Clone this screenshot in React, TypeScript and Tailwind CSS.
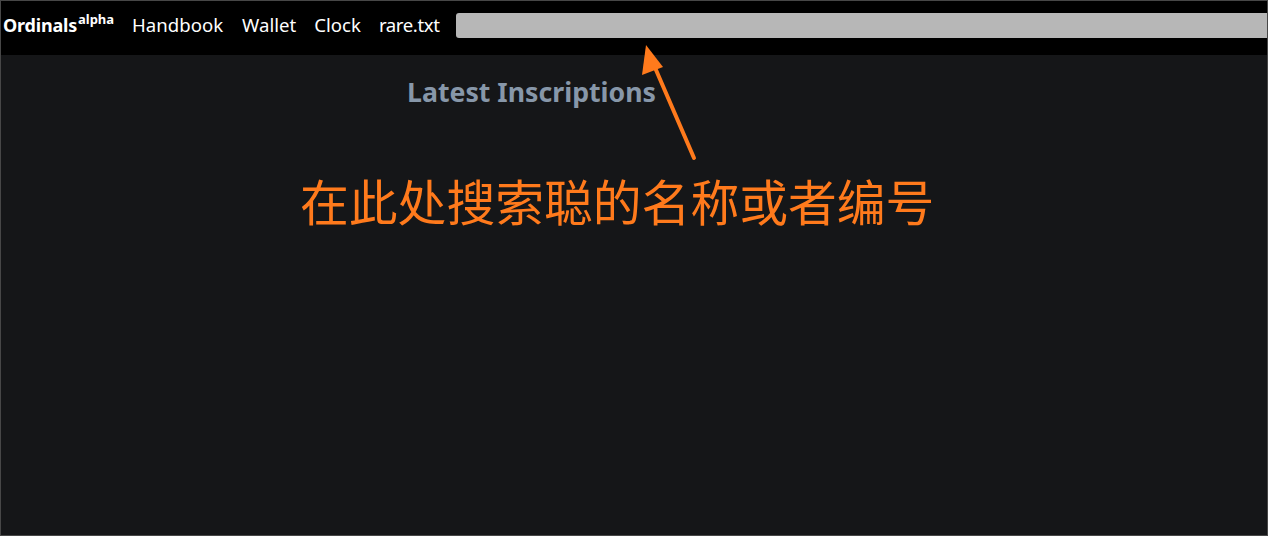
import React from "react";

export default function App() {
  return (
    <div
      className="relative w-[1268px] h-[536px] border border-[#474747] bg-[#151618] flex flex-col overflow-hidden"
      style={{ fontFamily: '"Noto Sans", "Open Sans", sans-serif' }}
    >
      <nav className="h-[54px] bg-black flex items-center pl-[2px] pb-[6px] shrink-0">
        <a className="text-white font-bold text-[18px] leading-none flex items-start tracking-[-0.2px]">
          Ordinals<span className="text-[13px] font-bold leading-none -mt-[3px] ml-[1px] tracking-normal">alpha</span>
        </a>
        <div className="flex items-center gap-[19px] ml-[18px] text-white text-[18.6px] leading-none">
          <a>Handbook</a>
          <a>Wallet</a>
          <a className="-ml-[1px]">Clock</a>
          <a className="-ml-[1px] tracking-[-0.4px]">rare.txt</a>
        </div>
        <div className="ml-[17px] flex-1 h-[25px] bg-[#b7b7b7] rounded-[3px] -mr-[10px]" />
      </nav>
      <main className="flex flex-col">
        <h1 className="ml-[406px] mt-[19px] text-[26.7px] font-bold text-[#8797a9] leading-[36px]">
          Latest Inscriptions
        </h1>
        <div
          className="ml-[299px] mt-[60px] text-[48.8px] leading-[60px] text-[#ff7a1c]"
          style={{ fontFamily: '"Noto Sans CJK SC", sans-serif' }}
        >
          在此处搜索聪的名称或者编号
        </div>
      </main>
      <svg
        className="absolute left-0 top-0 pointer-events-none"
        width="1268"
        height="536"
        viewBox="0 0 1268 536"
      >
        <line x1="693" y1="157" x2="652" y2="62" stroke="#ff7a1c" strokeWidth="4" strokeLinecap="round" />
        <polygon points="645,44 641,74 662,66" fill="#ff7a1c" />
      </svg>
    </div>
  );
}
